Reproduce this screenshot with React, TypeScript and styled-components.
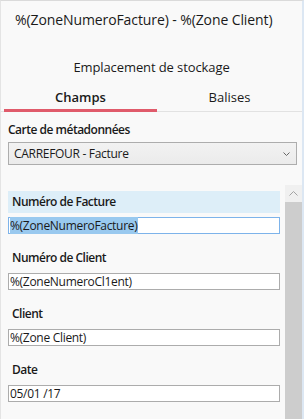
import React from 'react';
import styled, { createGlobalStyle } from 'styled-components';

const GlobalStyle = createGlobalStyle`
  html, body {
    margin: 0;
    padding: 0;
    background: #f9f9f9;
  }
  * {
    box-sizing: border-box;
  }
`;

const Frame = styled.div`
  width: 304px;
  height: 419px;
  display: flex;
  flex-direction: column;
  overflow: hidden;
  background-color: #f9f9f9;
  border-top: 1px solid #dadada;
  border-left: 1px solid #e4e4e4;
  border-right: 2px solid #dce7f3;
  font-family: 'Open Sans', 'Liberation Sans', sans-serif;
  font-size: 12px;
  color: #1a1a1a;
`;

const Title = styled.h1`
  margin: 0;
  padding-left: 14px;
  height: 37px;
  line-height: 37px;
  font-size: 14px;
  font-weight: 400;
  letter-spacing: -0.1px;
  white-space: nowrap;
`;

const Storage = styled.div`
  padding-top: 20px;
  line-height: 18px;
  font-size: 13px;
  letter-spacing: -0.1px;
  text-align: center;
`;

const TabsRow = styled.div`
  display: flex;
  padding-left: 3px;
  border-bottom: 1px solid #e2e2e2;
`;

const Tab = styled.div<{ $active?: boolean }>`
  width: ${p => (p.$active ? '153px' : 'auto')};
  flex: ${p => (p.$active ? 'none' : '1')};
  padding-top: 12px;
  padding-bottom: 3px;
  line-height: 18px;
  font-size: 13px;
  text-align: center;
  font-weight: ${p => (p.$active ? 600 : 400)};
  border-bottom: 3px solid ${p => (p.$active ? '#e05b6b' : 'transparent')};
  margin-bottom: -1px;
`;

const MapSection = styled.div`
  padding: 9px 5px 0 7px;
`;

const SectionLabel = styled.div`
  line-height: 18px;
  font-weight: 600;
  letter-spacing: -0.5px;
`;

const Select = styled.div`
  margin-top: 3px;
  height: 23px;
  display: flex;
  align-items: center;
  justify-content: space-between;
  padding: 0 6px 0 5px;
  letter-spacing: -0.3px;
  background: linear-gradient(#f2f2f2, #ebebeb);
  border: 1px solid #adadad;
`;

const ScrollArea = styled.div`
  flex: 1;
  min-height: 0;
  margin-top: 20px;
  display: flex;
  padding-left: 7px;
  gap: 5px;
`;

const Fields = styled.div`
  width: 272px;
  padding-top: 6px;
  display: flex;
  flex-direction: column;
`;

const Field = styled.div`
  margin-bottom: 13px;
`;

const FieldLabel = styled.div<{ $active?: boolean }>`
  height: 22px;
  line-height: 22px;
  padding-left: 4px;
  font-weight: 600;
  letter-spacing: -0.5px;
  background: ${p => (p.$active ? '#ddeef8' : 'transparent')};
`;

const TextBox = styled.div<{ $focused?: boolean }>`
  margin-top: 4px;
  height: 17px;
  line-height: 15px;
  padding-left: 1px;
  letter-spacing: -0.3px;
  background: #ffffff;
  border: 1px solid ${p => (p.$focused ? '#7db3ea' : '#acacac')};
  white-space: nowrap;
`;

const Selected = styled.span`
  background: #99c9ef;
  padding-right: 1px;
`;

const ScrollBar = styled.div`
  width: 17px;
  display: flex;
  flex-direction: column;
  background: #f0f0f0;
`;

const ScrollButton = styled.div`
  height: 17px;
  display: flex;
  align-items: center;
  justify-content: center;
`;

const Thumb = styled.div`
  flex: 1;
  background: #cdcdcd;
`;

const fields = [
  { label: 'Numéro de Facture', value: '%(ZoneNumeroFacture)' },
  { label: 'Numéro de Client', value: '%(ZoneNumeroCl1ent)' },
  { label: 'Client', value: '%(Zone Client)' },
  { label: 'Date', value: '05/01 /17' }
];

export default function App() {
  return (
    <>
      <GlobalStyle />
      <Frame>
        <Title>%(ZoneNumeroFacture) - %(Zone Client)</Title>
        <Storage>Emplacement de stockage</Storage>
        <TabsRow>
          <Tab $active>Champs</Tab>
          <Tab>Balises</Tab>
        </TabsRow>
        <MapSection>
          <SectionLabel>Carte de métadonnées</SectionLabel>
          <Select>
            <span>CARREFOUR - Facture</span>
            <svg width="7" height="4" viewBox="0 0 7 4">
              <polyline points="0.5,0.5 3.5,3.5 6.5,0.5" fill="none" stroke="#666" strokeWidth="1" />
            </svg>
          </Select>
        </MapSection>
        <ScrollArea>
          <Fields>
            {fields.map((f, i) => (
              <Field key={f.label}>
                <FieldLabel $active={i === 0}>{f.label}</FieldLabel>
                <TextBox $focused={i === 0}>
                  {i === 0 ? <Selected>{f.value}</Selected> : f.value}
                </TextBox>
              </Field>
            ))}
          </Fields>
          <ScrollBar>
            <ScrollButton>
              <svg width="9" height="5" viewBox="0 0 9 5">
                <polyline points="0.5,4.5 4.5,0.5 8.5,4.5" fill="none" stroke="#a3a3a3" strokeWidth="1" />
              </svg>
            </ScrollButton>
            <Thumb />
          </ScrollBar>
        </ScrollArea>
      </Frame>
    </>
  );
}
